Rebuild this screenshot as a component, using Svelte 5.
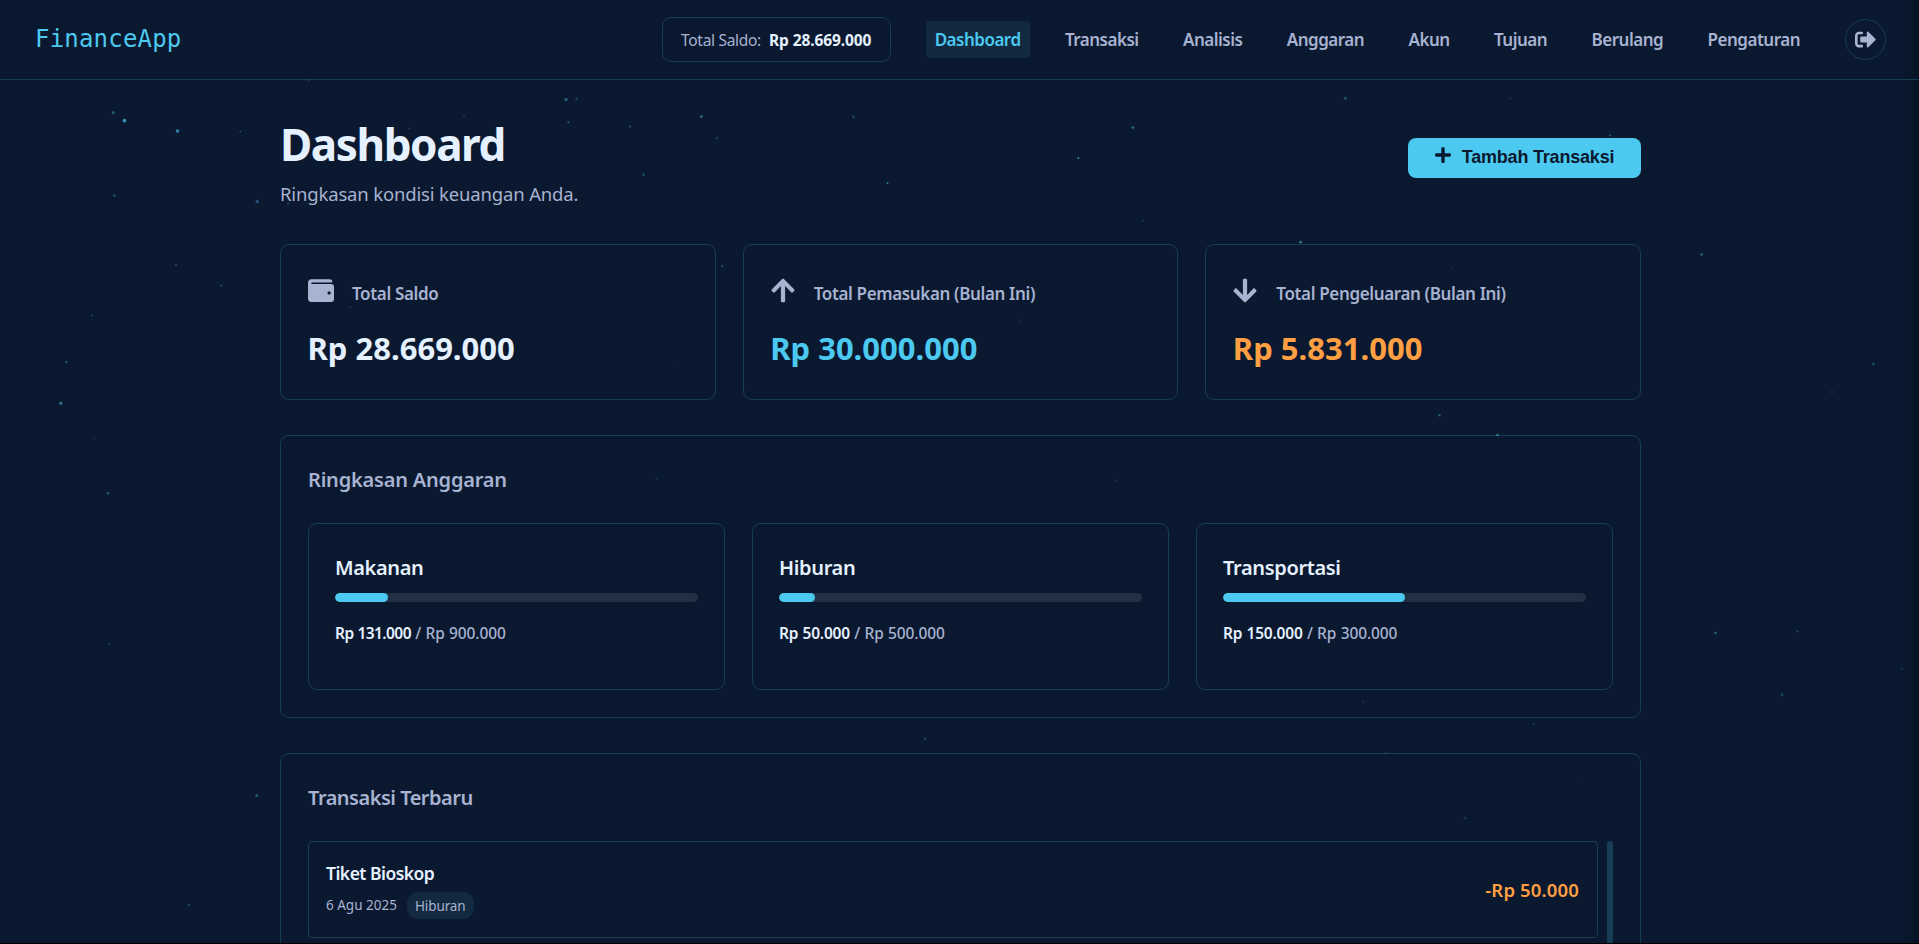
<script>
  const nav = ['Dashboard', 'Transaksi', 'Analisis', 'Anggaran', 'Akun', 'Tujuan', 'Berulang', 'Pengaturan'];

  const stats = [
    { icon: 'wallet', label: 'Total Saldo', value: 'Rp 28.669.000', tone: 'plain' },
    { icon: 'up', label: 'Total Pemasukan (Bulan Ini)', value: 'Rp 30.000.000', tone: 'income' },
    { icon: 'down', label: 'Total Pengeluaran (Bulan Ini)', value: 'Rp 5.831.000', tone: 'expense' }
  ];

  const budgets = [
    { name: 'Makanan', used: 131, limit: 900 },
    { name: 'Hiburan', used: 50, limit: 500 },
    { name: 'Transportasi', used: 150, limit: 300 }
  ];

  // x, y, radius, opacity
  const particles = [
    [113.3, 112.7, 1.6, 0.35], [124.5, 120.7, 1.9, 0.65], [177.5, 131, 1.8, 0.6], [240.3, 131.5, 0.8, 0.5],
    [114.3, 195.6, 1.4, 0.3], [257.2, 201.5, 1.7, 0.35], [288, 203.7, 1.1, 0.25], [309, 80.3, 1, 0.2],
    [464, 115.3, 1, 0.25], [409.2, 128.5, 0.7, 0.3], [385.3, 161, 1.2, 0.4], [566, 99.5, 1.7, 0.4],
    [576.6, 99, 1.5, 0.2], [568.4, 122.3, 1.1, 0.4], [630, 126.5, 1, 0.35], [701.3, 116.5, 1.5, 0.4],
    [716.8, 138, 1.3, 0.2], [853.5, 117, 1.7, 0.2], [643.5, 174.7, 1.2, 0.35], [887.5, 182.9, 1, 0.55],
    [1078.3, 158, 1.1, 0.6], [1132.8, 127.4, 1.5, 0.4], [1143, 220.5, 0.9, 0.25], [1345.3, 98.3, 1.5, 0.35],
    [1510.7, 98.3, 1, 0.15], [1610, 135.4, 1, 0.4], [176, 265.3, 1, 0.35], [221.3, 285.4, 1, 0.35],
    [92, 315.6, 1, 0.3], [66.4, 362, 1.2, 0.35], [60.8, 403.2, 1.6, 0.5], [94.4, 438, 0.9, 0.15],
    [107.8, 493.2, 1.3, 0.35], [109, 644.3, 1.1, 0.25], [256.7, 795.5, 1.6, 0.35], [189, 905, 1, 0.35],
    [722.3, 266, 1, 0.4], [350.5, 307, 1.2, 0.12], [1020.7, 320.8, 1.1, 0.1], [1300.6, 242.2, 1.4, 0.5],
    [1451.8, 268, 1.1, 0.1], [1439.5, 415.3, 1.1, 0.5], [1497.6, 435, 1.3, 0.5], [657, 478.5, 1.5, 0.12],
    [1115.3, 480.6, 1.5, 0.1], [675, 361, 0.9, 0.08], [925, 739, 1.4, 0.22], [1534, 724, 1.1, 0.2],
    [1465, 818, 1.6, 0.15], [1577, 778, 1.2, 0.06], [1701.5, 254.5, 1.2, 0.45], [1873.4, 364, 1.2, 0.35],
    [1832, 392, 1, 0.25], [1715.5, 633, 1.3, 0.4], [1797.5, 631.6, 1, 0.35], [1782, 694.8, 1.5, 0.25],
    [1363, 702, 1.1, 0.15], [1386, 753, 1, 0.15], [1902, 669, 1, 0.2]
  ];
</script>

<div class="page">
  <svg class="particles" viewBox="0 0 1919 944" aria-hidden="true">
    {#each particles as [x, y, r, o]}
      <circle cx={x} cy={y} {r} fill="#4cc9f0" opacity={o} />
    {/each}
  </svg>

  <header>
    <div class="logo">FinanceApp</div>
    <div class="bar">
      <div class="balance"><span>Total Saldo:</span><b>Rp 28.669.000</b></div>
      <nav>
        {#each nav as item, i}
          <a class={['link', i === 0 && 'active']} href="#{item}">{item}</a>
        {/each}
      </nav>
      <button class="logout" aria-label="Keluar">
        <svg viewBox="0 0 512 512" width="21" height="21">
          <path fill="currentColor" d="M497 273L329 441c-15 15-41 4.500-41-17v-96H152c-13.300 0-24-10.700-24-24v-96c0-13.300 10.700-24 24-24h136V88c0-21.400 25.900-32 41-17l168 168c9.300 9.400 9.300 24.600 0 34zM192 436v-40c0-6.600-5.400-12-12-12H96c-17.700 0-32-14.300-32-32V160c0-17.700 14.300-32 32-32h84c6.600 0 12-5.400 12-12V76c0-6.600-5.400-12-12-12H96c-53 0-96 43-96 96v192c0 53 43 96 96 96h84c6.600 0 12-5.400 12-12z" />
        </svg>
      </button>
    </div>
  </header>

  <main>
    <div class="heading">
      <div>
        <h1>Dashboard</h1>
        <p>Ringkasan kondisi keuangan Anda.</p>
      </div>
      <button class="add">
        <svg viewBox="0 0 448 512" width="16" height="18">
          <path fill="currentColor" d="M416 208H272V64c0-17.670-14.330-32-32-32h-32c-17.670 0-32 14.330-32 32v144H32c-17.670 0-32 14.330-32 32v32c0 17.670 14.330 32 32 32h144v144c0 17.670 14.330 32 32 32h32c17.670 0 32-14.330 32-32V304h144c17.670 0 32-14.330 32-32v-32c0-17.670-14.330-32-32-32z" />
        </svg>
        <span>Tambah Transaksi</span>
      </button>
    </div>

    <div class="stats">
      {#each stats as s}
        <article class="card stat">
          <div class="stat-head">
            {#if s.icon === 'wallet'}
              <svg class="wallet" viewBox="0 0 512 512" width="26" height="27">
                <path fill="currentColor" d="M461.200 128H80c-8.840 0-16-7.160-16-16s7.160-16 16-16h384c8.840 0 16-7.160 16-16 0-26.510-21.490-48-48-48H64C28.650 32 0 60.650 0 96v320c0 35.350 28.650 64 64 64h397.200c28.020 0 50.800-21.530 50.800-48V176c0-26.470-22.780-48-50.800-48zM416 336c-17.670 0-32-14.330-32-32s14.330-32 32-32 32 14.330 32 32-14.330 32-32 32z" />
              </svg>
            {:else}
              <svg class={['arrow', s.icon]} viewBox="0 0 448 512" width="24" height="27">
                <path fill="currentColor" d="M34.900 289.500l-22.200-22.200c-9.400-9.400-9.400-24.600 0-33.900L207 39c9.400-9.400 24.600-9.400 33.900 0l194.300 194.300c9.400 9.400 9.400 24.600 0 33.900L413 289.400c-9.500 9.500-25 9.300-34.300-.4L264 168.600V456c0 13.300-10.700 24-24 24h-32c-13.300 0-24-10.700-24-24V168.600L69.200 289.100c-9.300 9.800-24.800 10-34.300.4z" />
              </svg>
            {/if}
            <span class="stat-label">{s.label}</span>
          </div>
          <div class="value {s.tone}">{s.value}</div>
        </article>
      {/each}
    </div>

    <section class="card panel">
      <h2>Ringkasan Anggaran</h2>
      <div class="budgets">
        {#each budgets as b}
          <article class="card budget">
            <h3>{b.name}</h3>
            <div class="track"><div class="fill" style:width="{(b.used / b.limit) * 100}%"></div></div>
            <p><b>Rp {b.used}.000</b> / Rp {b.limit}.000</p>
          </article>
        {/each}
      </div>
    </section>

    <section class="card panel recent">
      <h2>Transaksi Terbaru</h2>
      <div class="list">
        <div class="item">
          <div>
            <div class="item-name">Tiket Bioskop</div>
            <div class="meta"><span>6 Agu 2025</span><span class="tag">Hiburan</span></div>
          </div>
          <div class="amount">-Rp 50.000</div>
        </div>
        <div class="thumb"></div>
      </div>
    </section>
  </main>
</div>

<style>
  :global(body) { margin: 0; background: #0a192f; overflow: hidden; }
  :global(*) { box-sizing: border-box; }
  h1, h2, h3, p { margin: 0; }
  button { font: inherit; cursor: pointer; }
  .page {
    position: relative;
    height: 944px;
    overflow: hidden;
    background: linear-gradient(90deg, transparent 1901px, #051424 1919px), #0a192f;
    border-bottom: 1px solid #000;
    color: #e6f1ff;
    font-family: "Noto Sans", "Open Sans", sans-serif;
  }
  .particles { position: absolute; inset: 0; width: 1919px; height: 944px; }
  header {
    height: 80px;
    padding: 0 33px 0 35px;
    display: flex;
    justify-content: space-between;
    align-items: center;
    border-bottom: 1px solid #173c56;
  }
  .logo {
    color: #4cc9f0;
    font: 24px/36px "DejaVu Sans Mono", monospace;
    letter-spacing: 0.200px;
    padding-bottom: 2px;
  }
  .bar, nav { display: flex; align-items: center; }
  .balance {
    width: 229px;
    height: 45px;
    margin-right: 35px;
    border: 1px solid #173c56;
    border-radius: 9px;
    display: flex;
    align-items: center;
    justify-content: center;
    gap: 8px;
    font-size: 15.500px;
    letter-spacing: -0.3px;
    color: #a8b2d1;
    white-space: nowrap;
  }
  .balance b { color: #e6f1ff; font-weight: 700; letter-spacing: -0.100px; }
  nav { gap: 26.400px; margin-right: 36px; }
  .link {
    height: 37px;
    line-height: 37px;
    padding: 0 9px;
    border-radius: 4px;
    color: #a8b2d1;
    text-decoration: none;
    font-size: 17px;
    font-weight: 600;
    letter-spacing: -0.5px;
  }
  .active { background: #12293f; color: #4cc9f0; }
  .logout {
    width: 41px;
    height: 41px;
    padding: 0;
    border: 1px solid #173c56;
    border-radius: 50%;
    background: none;
    color: #a8b2d1;
    display: grid;
    place-items: center;
  }
  main { width: 1361px; margin-left: 280px; padding-top: 36px; }
  .heading { height: 128px; display: flex; justify-content: space-between; }
  h1 { font-size: 44px; line-height: 56px; font-weight: 700; letter-spacing: -1.400px; }
  .heading p { margin-top: 8px; font-size: 18.500px; line-height: 27px; color: #a8b2d1; letter-spacing: -0.160px; }
  .add {
    width: 233px;
    height: 40px;
    margin-top: 22px;
    padding: 0 0 2px;
    border: 0;
    border-radius: 8px;
    background: #4cc9f0;
    color: #0a192f;
    font: 600 18px "Liberation Sans", sans-serif;
    letter-spacing: -0.200px;
    display: flex;
    align-items: center;
    justify-content: center;
    gap: 11px;
  }
  .add svg { margin-top: -5px; }
  .card { border: 1px solid #173c56; border-radius: 9px; }
  .stats { display: grid; grid-template-columns: repeat(3, 1fr); gap: 27px; }
  .stat { height: 156px; padding: 27px; }
  .stat-head { height: 42px; display: flex; align-items: center; color: #a8b2d1; }
  .stat-head svg { margin-top: -6px; flex: none; }
  .wallet { margin-right: 18px; }
  .arrow { margin-right: 19px; }
  .down { transform: rotate(180deg); }
  .stat-label { font-size: 17px; font-weight: 600; letter-spacing: -0.360px; }
  .value { margin: 13px 0 0 -0.500px; font-size: 31px; line-height: 42px; font-weight: 700; }
  .income { color: #4cc9f0; }
  .expense { color: #ff9f43; }
  .panel { margin-top: 35px; padding: 26px 27px; height: 283px; }
  h2 { font-size: 20px; line-height: 36px; font-weight: 600; color: #a8b2d1; letter-spacing: -0.200px; }
  .budgets { margin-top: 25px; display: grid; grid-template-columns: repeat(3, 1fr); gap: 27px; }
  .budget { height: 167px; padding: 26px; }
  h3 { font-size: 20px; line-height: 36px; font-weight: 600; letter-spacing: -0.350px; }
  .track { margin-top: 7px; height: 9px; border-radius: 5px; background: #232f43; overflow: hidden; }
  .fill { height: 100%; border-radius: 5px; background: #4cc9f0; }
  .budget p { margin-top: 18px; font-size: 15.500px; line-height: 27px; color: #a8b2d1; font-weight: 500; letter-spacing: -0.100px; word-spacing: 0.400px; }
  .budget b { color: #e6f1ff; font-weight: 600; letter-spacing: -0.200px; }
  .budget:first-child b { letter-spacing: -0.560px; }
  .recent { height: 400px; }
  .recent h2 { letter-spacing: -0.500px; }
  .list { margin-top: 25px; display: flex; gap: 9px; }
  .item {
    flex: 1;
    height: 97px;
    padding: 0 18px 0 17px;
    border: 1px solid #173c56;
    border-radius: 4px;
    display: flex;
    align-items: center;
    justify-content: space-between;
  }
  .item-name { font-size: 17.500px; line-height: 27px; font-weight: 600; letter-spacing: -0.520px; }
  .meta { margin-top: 4px; display: flex; align-items: center; gap: 10px; font-size: 13.500px; color: #a8b2d1; }
  .meta span { line-height: 28px; }
  .tag { height: 27px; padding: 0 8px; border-radius: 11px; background: #12293f; letter-spacing: -0.100px; }
  .amount { color: #ff9f43; font-size: 18.500px; font-weight: 600; letter-spacing: 0.150px; }
  .thumb { width: 6px; height: 200px; border-radius: 3px; background: #173c56; }
</style>
